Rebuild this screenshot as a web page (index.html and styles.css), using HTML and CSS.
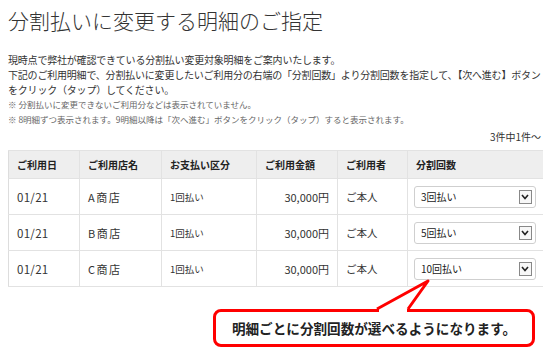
FILE: index.html
```html
<!DOCTYPE html>
<html lang="ja">
<head>
  <meta charset="UTF-8">
  <title>分割払いに変更する明細のご指定</title>
  <link rel="stylesheet" href="styles.css">
</head>
<body>

  <h1 class="page-title">分割払いに変更する明細のご指定</h1>

  <p class="lead">
    現時点で弊社が確認できている分割払い変更対象明細をご案内いたします。<br>
    下記のご利用明細で、分割払いに変更したいご利用分の右端の「分割回数」より分割回数を指定して、【次へ進む】ボタン<br>
    をクリック（タップ）してください。
  </p>

  <ul class="notes">
    <li>※ 分割払いに変更できないご利用分などは表示されていません。</li>
    <li>※ 8明細ずつ表示されます。9明細以降は「次へ進む」ボタンをクリック（タップ）すると表示されます。</li>
  </ul>

  <p class="count">3件中1件〜</p>

  <table class="detail-table">
    <colgroup>
      <col class="c-date">
      <col class="c-shop">
      <col class="c-pay">
      <col class="c-amount">
      <col class="c-user">
      <col class="c-split">
    </colgroup>
    <thead>
      <tr>
        <th>ご利用日</th>
        <th>ご利用店名</th>
        <th>お支払い区分</th>
        <th>ご利用金額</th>
        <th>ご利用者</th>
        <th>分割回数</th>
      </tr>
    </thead>
    <tbody>
      <tr>
        <td class="date">01/21</td>
        <td class="shop">A商店</td>
        <td class="pay">1回払い</td>
        <td class="amount">30,000円</td>
        <td class="user">ご本人</td>
        <td><div class="picker"><span>3回払い</span><i class="picker-btn"><svg width="8" height="6" viewBox="0 0 8 6"><polyline points="1,1 4,4.5 7,1" fill="none" stroke="#222" stroke-width="1.6"/></svg></i></div></td>
      </tr>
      <tr>
        <td class="date">01/21</td>
        <td class="shop">B商店</td>
        <td class="pay">1回払い</td>
        <td class="amount">30,000円</td>
        <td class="user">ご本人</td>
        <td><div class="picker"><span>5回払い</span><i class="picker-btn"><svg width="8" height="6" viewBox="0 0 8 6"><polyline points="1,1 4,4.5 7,1" fill="none" stroke="#222" stroke-width="1.6"/></svg></i></div></td>
      </tr>
      <tr>
        <td class="date">01/21</td>
        <td class="shop">C商店</td>
        <td class="pay">1回払い</td>
        <td class="amount">30,000円</td>
        <td class="user">ご本人</td>
        <td><div class="picker"><span>10回払い</span><i class="picker-btn"><svg width="8" height="6" viewBox="0 0 8 6"><polyline points="1,1 4,4.5 7,1" fill="none" stroke="#222" stroke-width="1.6"/></svg></i></div></td>
      </tr>
    </tbody>
  </table>

  <div class="callout">
    <svg class="callout-tail" width="66" height="36" viewBox="0 0 66 36">
      <polygon points="9,30 58,3 37,30 37,35 9,35" fill="#fff"/>
      <polyline points="7,31 58,3 38,31" fill="none" stroke="#f00" stroke-width="3" stroke-linejoin="round"/>
    </svg>
    明細ごとに分割回数が選べるようになります。
  </div>

</body>
</html>
```

FILE: styles.css
```css
body {
  margin: 0;
  padding: 8px;
  font-family: "Noto Sans CJK JP", "Noto Sans", sans-serif;
  color: #333;
  background: #fff;
}

.page-title {
  margin: 0 0 20px;
  font-size: 21px;
  font-weight: 300;
  line-height: 24px;
  color: #333;
}

.lead {
  margin: 0;
  font-size: 10px;
  line-height: 15px;
  letter-spacing: -0.2px;
  white-space: nowrap;
  color: #333;
}

.notes {
  margin: 0;
  padding: 0;
  list-style: none;
  font-size: 8.5px;
  line-height: 15px;
  color: #666;
}

.count {
  margin: 3px 0 6px;
  text-align: right;
  font-size: 10px;
  line-height: 14px;
  padding-right: 1px;
  color: #333;
}

.detail-table {
  width: 534px;
  border-collapse: collapse;
  table-layout: fixed;
  font-size: 11px;
  color: #333;
}

.c-date { width: 71px; }
.c-shop { width: 82px; }
.c-pay { width: 95px; }
.c-amount { width: 81px; }
.c-user { width: 70px; }
.c-split { width: 135px; }

.detail-table th,
.detail-table td {
  border: 1px solid #e2e2e2;
  padding: 0 8px;
  text-align: left;
}

.detail-table th {
  height: 27px;
  background: #eee;
  font-size: 10px;
  font-weight: bold;
  color: #222;
}

.detail-table td {
  height: 35px;
}

.detail-table tr > :first-child {
  border-left-color: #ddd;
}

.detail-table tr > :last-child {
  border-right: none;
}

.date {
  font-size: 11.5px;
  letter-spacing: 0.3px;
}

.shop {
  font-size: 11px;
  letter-spacing: 1.5px;
}

.pay {
  font-size: 9.5px;
}

.amount {
  text-align: right !important;
  font-size: 11px;
}

.user {
  font-size: 10.5px;
}

.picker {
  display: flex;
  align-items: center;
  justify-content: space-between;
  height: 20px;
  margin-left: -2px;
  margin-right: -1px;
  padding: 0 3px 0 6px;
  border: 1px solid #cfcfcf;
  border-radius: 3px;
  font-size: 10px;
  color: #222;
}

.picker-btn {
  display: flex;
  align-items: center;
  justify-content: center;
  width: 11px;
  height: 12px;
  border: 1px solid #888;
  background: #f7f7f7;
}

.callout {
  position: relative;
  margin: 22px 0 0 205px;
  width: 316px;
  height: 32px;
  border: 3px solid #f00;
  border-radius: 8px;
  text-align: center;
  font-size: 13.6px;
  font-weight: bold;
  line-height: 32px;
  color: #222;
}

.callout-tail {
  position: absolute;
  left: 154px;
  top: -34px;
}
```
